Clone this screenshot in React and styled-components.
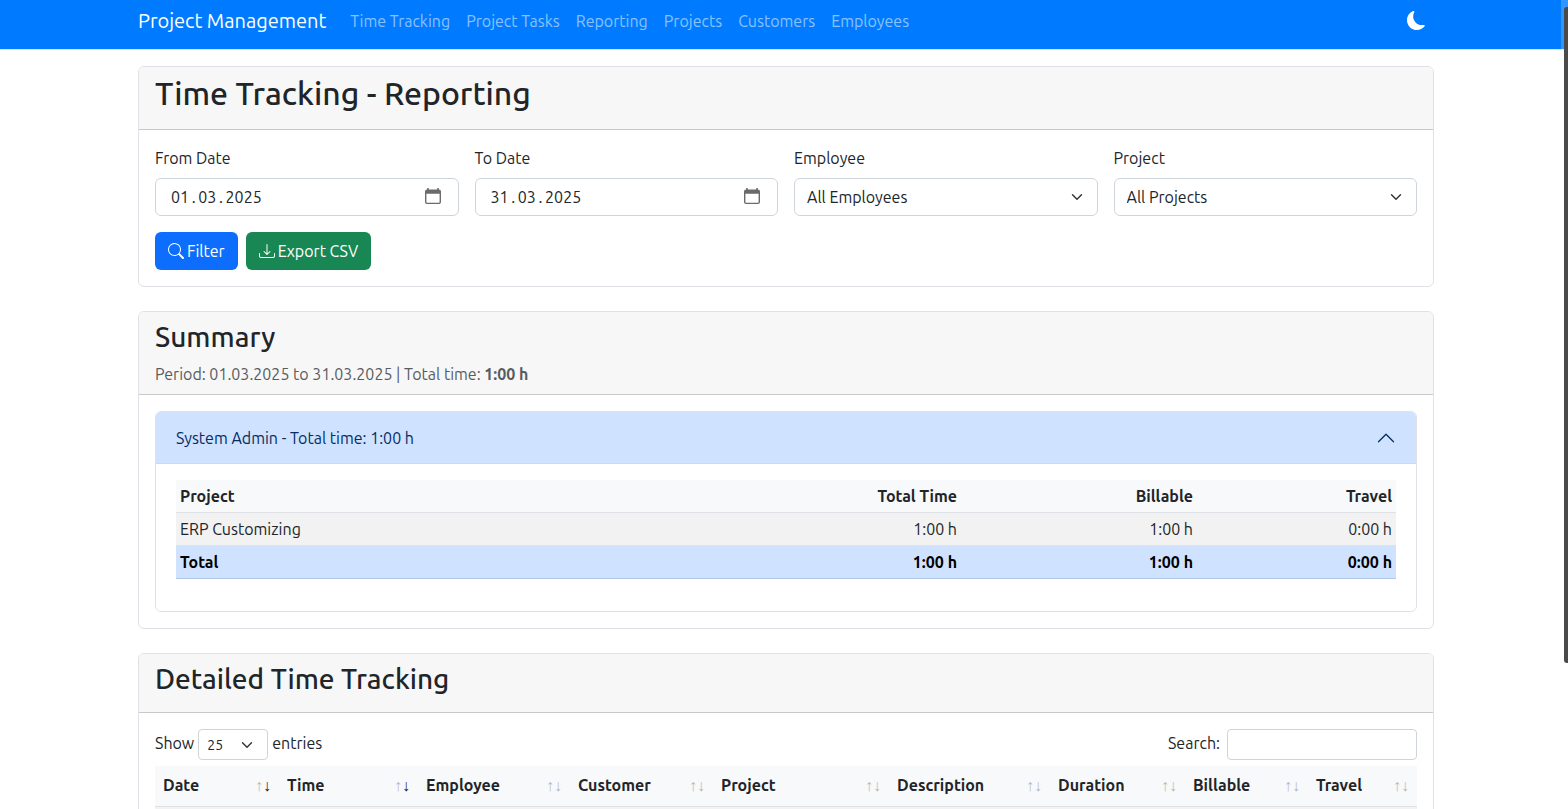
import React, { useState } from "react";
import styled, { createGlobalStyle } from "styled-components";
import { BsSearch, BsDownload, BsMoonFill } from "react-icons/bs";

const GlobalStyle = createGlobalStyle`
  *, *::before, *::after { box-sizing: border-box; }
  body {
    margin: 0;
    background: #fff;
    color: #212529;
    font-family: Ubuntu, "Noto Sans", "Open Sans", sans-serif;
    font-size: 16px;
    line-height: 24px;
  }
  h1, h2, p { margin: 0; }
  button, input, select { font: inherit; color: inherit; }
`;

const Page = styled.div`
  position: relative;
  height: 100vh;
  overflow: hidden;
`;

const Container = styled.div`
  width: 100%;
  max-width: 1324px;
  margin: 0 auto;
  padding: 0 12px 0 16px;
`;

const Navbar = styled.nav`
  background: #007bff;
  padding-bottom: 8px;
  box-shadow: 0 1px 0 #dee2e6;
`;

const NavRow = styled(Container)`
  display: flex;
  align-items: center;
  height: 41px;
`;

const Brand = styled.a`
  color: #fff;
  font-size: 20px;
  line-height: 30px;
  text-decoration: none;
  white-space: nowrap;
  margin-right: 16px;
`;

const NavLinks = styled.ul`
  display: flex;
  flex: 1;
  margin: 0;
  padding: 0;
  list-style: none;
`;

const NavLink = styled.a`
  padding: 8px;
  color: rgba(255, 255, 255, 0.55);
  text-decoration: none;
  white-space: nowrap;
`;

const ThemeButton = styled.button`
  display: flex;
  padding: 8px;
  border: 0;
  background: none;
  color: #fff;
  font-size: 19px;
`;

const Main = styled(Container)`
  display: flex;
  flex-direction: column;
  gap: 24px;
  padding-top: 17px;
`;

const Card = styled.section`
  border: 1px solid #dee2e6;
  border-radius: 6px;
  background: #fff;
  overflow: hidden;
`;

const CardHeader = styled.header`
  padding: 8px 16px;
  background: #f7f7f7;
  border-bottom: 1px solid #c8c9ca;
`;

const Title = styled.h1`
  font-size: 32px;
  font-weight: 500;
  line-height: 36px;
  margin-bottom: 10px;
`;

const Subtitle = styled.h2`
  font-size: 28px;
  font-weight: 500;
  line-height: 34px;
  margin-bottom: 8px;
`;

const Period = styled.p`
  color: #595c5f;
`;

const CardBody = styled.div`
  padding: 16px;
`;

const Filters = styled.div`
  display: grid;
  grid-template-columns: repeat(4, 1fr);
  gap: 16px;
`;

const Field = styled.div`
  display: flex;
  flex-direction: column;
  gap: 8px;
`;

const DateBox = styled.div`
  display: flex;
  align-items: center;
  height: 38px;
  padding: 0 16px 0 15px;
  border: 1px solid #ced4da;
  border-radius: 6px;
`;

const DateInput = styled.input`
  flex: 1;
  min-width: 0;
  padding: 0;
  border: 0;
  background: none;
  outline: 0;
`;

const PickerButton = styled.button`
  display: flex;
  padding: 0 0 2px;
  border: 0;
  background: none;
  color: #6b6b6b;
`;

const SelectBox = styled.span`
  position: relative;
  display: ${(p) => (p.$small ? "inline-block" : "block")};
  width: ${(p) => (p.$small ? "70px" : "100%")};

  svg {
    position: absolute;
    right: 15px;
    top: 50%;
    height: 12px;
    width: 12px;
    margin-top: -6px;
    pointer-events: none;
  }
`;

const Select = styled.select`
  display: block;
  appearance: none;
  width: 100%;
  height: ${(p) => (p.$small ? "31px" : "38px")};
  padding: ${(p) => (p.$small ? "0 8px" : "0 12px")};
  font-size: ${(p) => (p.$small ? "14px" : "16px")};
  border: 1px solid #ced4da;
  border-radius: ${(p) => (p.$small ? "4px" : "6px")};
  background: #fff;
`;

const Actions = styled.div`
  display: flex;
  gap: 8px;
  margin-top: 16px;
`;

const Button = styled.button`
  display: flex;
  align-items: center;
  gap: 3px;
  height: 38px;
  padding: 0 13px;
  border: 0;
  border-radius: 6px;
  background: ${(p) => (p.$success ? "#198754" : "#0d6efd")};
  color: #fff;
  white-space: nowrap;

  svg { width: 16px; height: 16px; }
`;

const Accordion = styled.div`
  border: 1px solid #dee2e6;
  border-radius: 6px;
  overflow: hidden;
`;

const AccordionButton = styled.button`
  display: flex;
  align-items: center;
  justify-content: space-between;
  width: 100%;
  height: 52px;
  padding: 0 20px;
  border: 0;
  border-bottom: 1px solid #ced9e8;
  background: #cfe2ff;
  color: #052c65;
  text-align: left;
`;

const AccordionBody = styled.div`
  padding: 16px 20px 32px;
`;

const Table = styled.table`
  width: 100%;
  table-layout: fixed;
  border-collapse: separate;
  border-spacing: 0;
`;

const SummaryCell = styled.td`
  padding: 4px;
  height: 33px;
  text-align: ${(p) => (p.$number ? "right" : "left")};
  font-weight: ${(p) => (p.$bold ? 700 : 400)};
  border-bottom: 1px solid #dee2e6;
`;

const SummaryRow = styled.tr`
  background: ${(p) => ({ head: "#f8f9fa", body: "#f2f2f2", total: "#cfe2ff" })[p.$kind]};
  color: ${(p) => (p.$kind === "total" ? "#000" : "#212529")};

  ${SummaryCell} {
    border-color: ${(p) => (p.$kind === "total" ? "#b1c8ea" : "#dee2e6")};
  }
`;

const TableTools = styled.div`
  display: flex;
  align-items: center;
  justify-content: space-between;
  margin-bottom: 6px;
`;

const ToolLabel = styled.label`
  display: flex;
  align-items: flex-start;
  gap: ${(p) => p.$gap}px;
  line-height: 28px;
`;

const SearchInput = styled.input`
  width: 190px;
  height: 31px;
  padding: 0 8px;
  border: 1px solid #ced4da;
  border-radius: 4px;
  font-size: 14px;
`;

const SortHead = styled.th`
  padding: 0;
  background: #f8f9fa;
  border-bottom: 1px solid #dee2e6;
`;

const SortButton = styled.button`
  display: flex;
  align-items: center;
  justify-content: space-between;
  width: 100%;
  height: 40px;
  padding: 0 8px 2px;
  border: 0;
  background: none;
  font-weight: 700;
`;

const Arrows = styled.span`
  display: flex;
  font-size: 16px;
  font-weight: 400;
`;

const Arrow = styled.span`
  width: 8px;
  text-align: center;
  opacity: ${(p) => (p.$active ? 1 : 0.3)};
`;

const EntryCell = styled.td`
  height: 41px;
  background: #f2f2f2;
`;

const ScrollTrack = styled.div`
  position: absolute;
  top: 0;
  right: 0;
  bottom: 0;
  width: 7px;
  padding: 7px 0 0 3px;
  background: rgba(255, 255, 255, 0.2);
`;

const ScrollThumb = styled.div`
  height: calc(100% * 9 / 11);
  background: #4a4a48;
  border-radius: 3px 0 0 3px;
`;

const links = ["Time Tracking", "Project Tasks", "Reporting", "Projects", "Customers", "Employees"];

const summary = [
  { kind: "head", cells: ["Project", "Total Time", "Billable", "Travel"] },
  { kind: "body", cells: ["ERP Customizing", "1:00 h", "1:00 h", "0:00 h"] },
  { kind: "total", cells: ["Total", "1:00 h", "1:00 h", "0:00 h"] },
];
const summaryWidths = [490, 295, 236, 199];

const columns = [
  { name: "Date", width: 124, sorted: true },
  { name: "Time", width: 139, sorted: true },
  { name: "Employee", width: 152 },
  { name: "Customer", width: 143 },
  { name: "Project", width: 176 },
  { name: "Description", width: 161 },
  { name: "Duration", width: 135 },
  { name: "Billable", width: 123 },
  { name: "Travel", width: 109 },
];

// Day, month and year are set apart with thin spaces around the dots.
const formatDate = (...parts) => parts.join("\u2009.\u2009");

function Chevron() {
  return (
    <svg viewBox="0 0 16 16" fill="none" stroke="#343a40" strokeWidth="2" strokeLinecap="round" strokeLinejoin="round" aria-hidden="true">
      <path d="m2 5 6 6 6-6" />
    </svg>
  );
}

function DateField({ id, label, initial }) {
  const [value, setValue] = useState(initial);
  return (
    <Field>
      <label htmlFor={id}>{label}</label>
      <DateBox>
        <DateInput id={id} value={value} onChange={(e) => setValue(e.target.value)} />
        <PickerButton type="button" aria-label={`Pick ${label}`}>
          <svg width="18" height="18" viewBox="0 0 18 18" aria-hidden="true">
            <path fill="currentColor" fillRule="evenodd" d="M3.200 1h1.600v1.600h8.400V1h1.600v1.600H15a2 2 0 0 1 2 2V15a2 2 0 0 1-2 2H3a2 2 0 0 1-2-2V4.600a2 2 0 0 1 2-2h.2zM2.400 6.800V15a.7.7 0 0 0 .7.7h11.800a.7.7 0 0 0 .7-.7V6.800z" />
          </svg>
        </PickerButton>
      </DateBox>
    </Field>
  );
}

function SelectField({ id, label, option }) {
  return (
    <Field>
      <label htmlFor={id}>{label}</label>
      <SelectBox>
        <Select id={id}><option>{option}</option></Select>
        <Chevron />
      </SelectBox>
    </Field>
  );
}

export default function App() {
  return (
    <Page>
      <GlobalStyle />
      <Navbar>
        <NavRow>
          <Brand href="#home">Project Management</Brand>
          <NavLinks>
            {links.map((name) => (
              <li key={name}><NavLink href={`#${name}`}>{name}</NavLink></li>
            ))}
          </NavLinks>
          <ThemeButton type="button" aria-label="Toggle dark mode"><BsMoonFill /></ThemeButton>
        </NavRow>
      </Navbar>
      <Main as="main">
        <Card>
          <CardHeader><Title>Time Tracking - Reporting</Title></CardHeader>
          <CardBody>
            <Filters>
              <DateField id="from" label="From Date" initial={formatDate("01", "03", "2025")} />
              <DateField id="to" label="To Date" initial={formatDate("31", "03", "2025")} />
              <SelectField id="employee" label="Employee" option="All Employees" />
              <SelectField id="project" label="Project" option="All Projects" />
            </Filters>
            <Actions>
              <Button type="button"><BsSearch />Filter</Button>
              <Button type="button" $success><BsDownload />Export CSV</Button>
            </Actions>
          </CardBody>
        </Card>

        <Card>
          <CardHeader>
            <Subtitle>Summary</Subtitle>
            <Period>Period: 01.03.2025 to 31.03.2025 | Total time: <strong>1:00 h</strong></Period>
          </CardHeader>
          <CardBody>
            <Accordion>
              <AccordionButton type="button" aria-expanded="true">
                System Admin - Total time: 1:00 h
                <svg width="20" height="20" viewBox="0 0 16 16" fill="none" stroke="currentColor" strokeLinecap="round" strokeLinejoin="round" aria-hidden="true">
                  <path d="m2 11 6-6 6 6" />
                </svg>
              </AccordionButton>
              <AccordionBody>
                <Table>
                  <colgroup>
                    {summaryWidths.map((w, i) => <col key={i} width={w} />)}
                  </colgroup>
                  <tbody>
                    {summary.map(({ kind, cells }) => (
                      <SummaryRow key={kind} $kind={kind}>
                        {cells.map((cell, i) => (
                          <SummaryCell key={i} as={kind === "head" ? "th" : "td"} $number={i > 0} $bold={kind !== "body"}>
                            {cell}
                          </SummaryCell>
                        ))}
                      </SummaryRow>
                    ))}
                  </tbody>
                </Table>
              </AccordionBody>
            </Accordion>
          </CardBody>
        </Card>

        <Card>
          <CardHeader><Subtitle>Detailed Time Tracking</Subtitle></CardHeader>
          <CardBody>
            <TableTools>
              <ToolLabel $gap={4}>
                Show
                <SelectBox $small>
                  <Select $small><option>25</option></Select>
                  <Chevron />
                </SelectBox>
                entries
              </ToolLabel>
              <ToolLabel $gap={7}>Search:<SearchInput type="search" /></ToolLabel>
            </TableTools>
            <Table>
              <colgroup>
                {columns.map((c) => <col key={c.name} width={c.width} />)}
              </colgroup>
              <thead>
                <tr>
                  {columns.map((c) => (
                    <SortHead key={c.name}>
                      <SortButton type="button">
                        {c.name}
                        <Arrows aria-hidden="true">
                          <Arrow>↑</Arrow>
                          <Arrow $active={c.sorted}>↓</Arrow>
                        </Arrows>
                      </SortButton>
                    </SortHead>
                  ))}
                </tr>
              </thead>
              <tbody>
                <tr><EntryCell colSpan={columns.length} /></tr>
              </tbody>
            </Table>
          </CardBody>
        </Card>
      </Main>
      <ScrollTrack><ScrollThumb /></ScrollTrack>
    </Page>
  );
}
